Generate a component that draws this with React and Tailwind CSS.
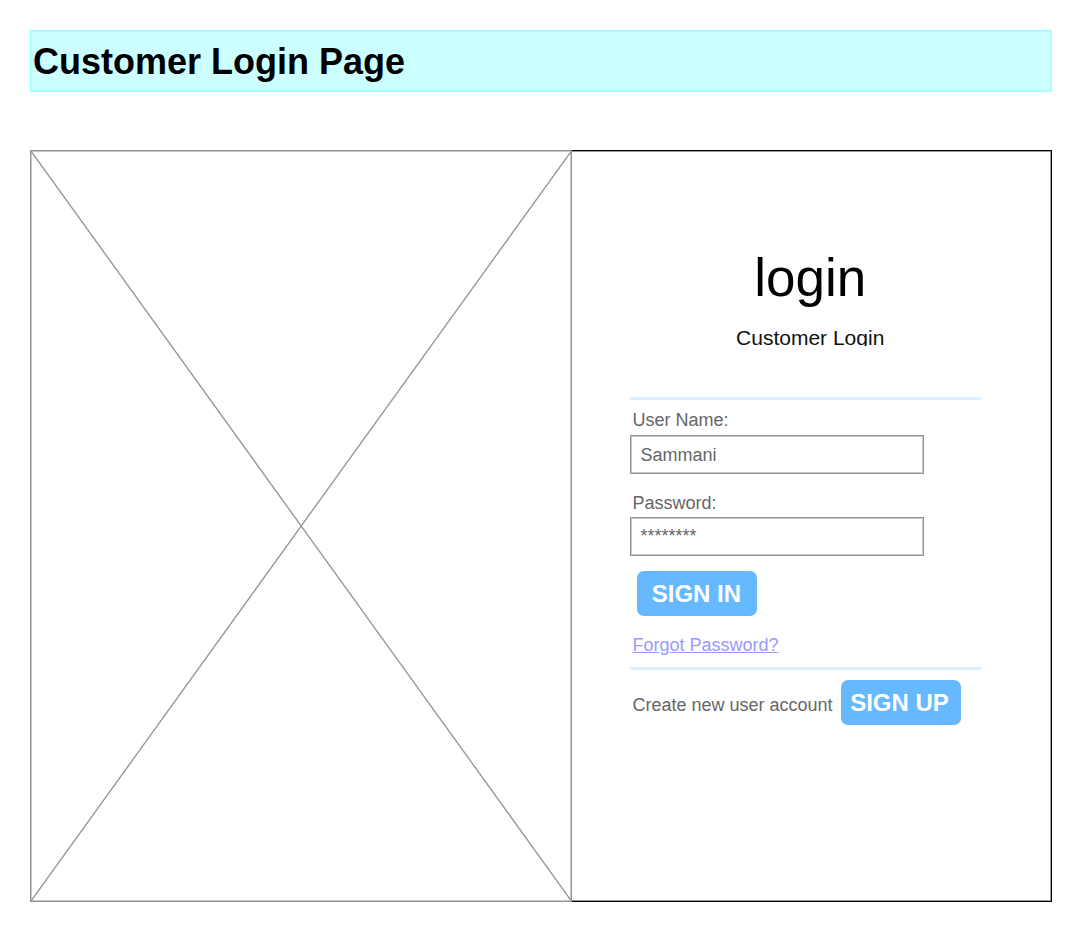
const buttonClass =
  "flex h-[45px] w-[120px] items-center justify-center rounded-[7px] bg-[#66b8ff] pr-[2px] text-2xl font-bold text-white";
const inputClass =
  "block h-[39px] w-full max-w-[294px] border border-[#949494] bg-white px-[9px] text-lg leading-5 text-[#666] shadow-[inset_0_0_0_1px_#c8c8c8] outline-none";

function ImagePlaceholder() {
  return (
    <div className="min-w-0 flex-[542] border border-[#949494] shadow-[inset_0_0_0_1px_#c8c8c8]">
      <svg
        className="block h-[750px] w-full"
        viewBox="0 0 540 750"
        preserveAspectRatio="none"
        role="img"
        aria-label="Image placeholder"
      >
        <path d="M0 0L540 750M540 0L0 750" stroke="#999999" strokeWidth="1.4" fill="none" />
      </svg>
    </div>
  );
}

function Divider() {
  return <hr className="h-[3px] border-0 bg-[#deeefe]" />;
}

function LoginForm() {
  return (
    <form
      className="ml-[58px] mr-[70px] mt-[51px] text-lg leading-5 text-[#666]"
      onSubmit={(event) => event.preventDefault()}
    >
      <Divider />
      <label htmlFor="username" className="mt-[10px] block pl-[2px]">
        User Name:
      </label>
      <input id="username" type="text" defaultValue="Sammani" className={`mt-[5px] pt-[2px] ${inputClass}`} />
      <label htmlFor="password" className="mt-[19px] block pl-[2px]">
        Password:
      </label>
      <input id="password" type="text" defaultValue="********" className={`mt-1 ${inputClass}`} />
      <button type="submit" className={`ml-[7px] mt-[15px] ${buttonClass}`}>
        SIGN IN
      </button>
      <a href="#forgot" className="mb-3 ml-[2px] mt-[19px] block w-fit text-[#9999ff] underline">
        Forgot Password?
      </a>
      <Divider />
      <div className="mt-[10px] flex items-center gap-2 pl-[2px]">
        <p className="pt-1 whitespace-nowrap">Create new user account</p>
        <button type="button" className={buttonClass}>
          SIGN UP
        </button>
      </div>
    </form>
  );
}

export default function App() {
  return (
    <div className="bg-white p-[30px] font-['Liberation_Sans',Arial,sans-serif]">
      <header className="flex h-[62px] items-center border border-[#99ffff] bg-[#ccffff] pl-[2px] pt-[2px] shadow-[inset_0_0_0_1px_#b3ffff]">
        <h1 className="text-4xl font-bold text-black">Customer Login Page</h1>
      </header>
      <main className="mt-[58px] flex">
        <ImagePlaceholder />
        <section className="min-w-0 flex-[480] border border-l-0 border-black shadow-[inset_-1px_1px_0_0_#999,inset_0_-1px_0_0_#999]">
          <h2 className="mt-[96px] pr-[3px] text-center text-[53px] leading-[62px] text-black">login</h2>
          <p className="mt-[17px] h-5 overflow-hidden pr-[3px] text-center text-[21px] leading-6 text-[#111]">
            Customer Login
          </p>
          <LoginForm />
        </section>
      </main>
    </div>
  );
}
